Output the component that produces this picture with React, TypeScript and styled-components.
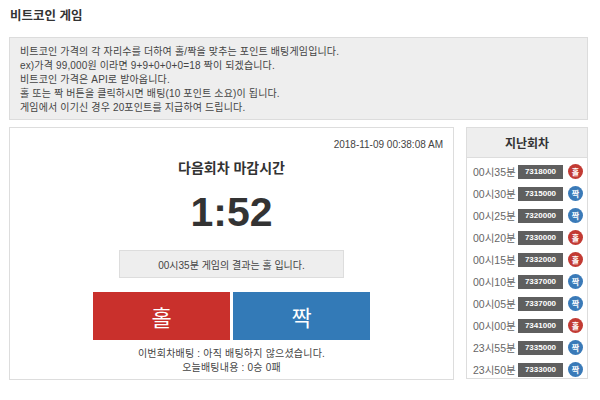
import React from "react";
import styled, { createGlobalStyle } from "styled-components";

const Global = createGlobalStyle`
  html, body { margin: 0; padding: 0; background: #fff; }
  body {
    font-family: "Liberation Sans", "Noto Sans CJK KR", Arial, sans-serif;
    color: #333;
  }
`;

const Page = styled.div`
  width: 579px;
  margin-left: 9px;
  display: flex;
  flex-direction: column;
`;

const Title = styled.h1`
  margin: 6px 0 11px 1px;
  font-size: 12.5px;
  line-height: 20px;
  font-weight: 700;
  color: #333;
`;

const InfoBox = styled.div`
  background: #eeeeee;
  border: 1px solid #dcdcdc;
  padding: 7px 10px 4px;
  font-size: 10px;
  line-height: 14px;
  color: #444;
  letter-spacing: 0.15px;
`;

const Columns = styled.div`
  display: flex;
  gap: 12px;
  margin-top: 7px;
  align-items: flex-start;
`;

const MainPanel = styled.div`
  width: 445px;
  box-sizing: border-box;
  border: 1px solid #dddddd;
  padding: 10px 10px 4px;
  display: flex;
  flex-direction: column;
  align-items: center;
`;

const DateLine = styled.div`
  align-self: flex-end;
  font-size: 10px;
  line-height: 14px;
  color: #444;
`;

const Heading = styled.div`
  margin-top: 6px;
  font-size: 14px;
  line-height: 20px;
  font-weight: 700;
  color: #333;
`;

const Timer = styled.div`
  margin-top: 12px;
  font-size: 41px;
  line-height: 44px;
  font-weight: 700;
  color: #333;
`;

const ResultBox = styled.div`
  margin-top: 16px;
  width: 225px;
  height: 28px;
  box-sizing: border-box;
  background: #eeeeee;
  border: 1px solid #dddddd;
  display: flex;
  align-items: center;
  justify-content: center;
  font-size: 10px;
  color: #444;
`;

const ButtonRow = styled.div`
  margin-top: 14px;
  display: flex;
  gap: 3px;
`;

const BetButton = styled.button<{ $tone: "odd" | "even" }>`
  width: 137px;
  height: 48px;
  border: none;
  padding: 0;
  background: ${(p) => (p.$tone === "odd" ? "#c9302c" : "#337ab7")};
  color: #fff;
  font-family: "Liberation Sans", "Noto Sans CJK KR", sans-serif;
  font-size: 22px;
  cursor: pointer;
`;

const Note = styled.div<{ $first?: boolean }>`
  margin-top: ${(p) => (p.$first ? "7px" : "0")};
  font-size: 10px;
  line-height: 14px;
  color: #444;
  letter-spacing: 0.2px;
`;

const Side = styled.div`
  width: 122px;
  box-sizing: border-box;
  border: 1px solid #dddddd;
`;

const SideHeader = styled.div`
  height: 29px;
  background: #eeeeee;
  border-bottom: 1px solid #dddddd;
  display: flex;
  align-items: center;
  justify-content: center;
  font-size: 12px;
  font-weight: 700;
  color: #333;
`;

const SideList = styled.div`
  padding: 5px 0 0 6px;
  display: flex;
  flex-direction: column;
  gap: 5px;
`;

const SideRow = styled.div`
  height: 17px;
  display: flex;
  align-items: center;
`;

const RoundTime = styled.span`
  width: 45px;
  font-size: 10.5px;
  color: #666;
`;

const Price = styled.span`
  width: 45px;
  height: 14px;
  background: #5f5f5f;
  color: #fff;
  font-size: 8px;
  font-weight: 700;
  display: flex;
  align-items: center;
  justify-content: center;
`;

const Dot = styled.span<{ $tone: "odd" | "even" }>`
  margin-left: 5px;
  width: 15px;
  height: 15px;
  border-radius: 50%;
  background: ${(p) => (p.$tone === "odd" ? "#c23a33" : "#3a7ab8")};
  color: #fff;
  font-size: 8px;
  font-weight: 700;
  display: flex;
  align-items: center;
  justify-content: center;
`;

const rounds: { t: string; p: string; r: "odd" | "even" }[] = [
  { t: "00시35분", p: "7318000", r: "odd" },
  { t: "00시30분", p: "7315000", r: "even" },
  { t: "00시25분", p: "7320000", r: "even" },
  { t: "00시20분", p: "7330000", r: "odd" },
  { t: "00시15분", p: "7332000", r: "odd" },
  { t: "00시10분", p: "7337000", r: "even" },
  { t: "00시05분", p: "7337000", r: "even" },
  { t: "00시00분", p: "7341000", r: "odd" },
  { t: "23시55분", p: "7335000", r: "even" },
  { t: "23시50분", p: "7333000", r: "even" },
];

export default function App() {
  return (
    <>
      <Global />
      <Page>
        <Title>비트코인 게임</Title>
        <InfoBox>
          비트코인 가격의 각 자리수를 더하여 홀/짝을 맞추는 포인트 배팅게임입니다.
          <br />
          ex)가격 99,000원 이라면 9+9+0+0+0=18 짝이 되겠습니다.
          <br />
          비트코인 가격은 API로 받아옵니다.
          <br />
          홀 또는 짝 버튼을 클릭하시면 배팅(10 포인트 소요)이 됩니다.
          <br />
          게임에서 이기신 경우 20포인트를 지급하여 드립니다.
        </InfoBox>
        <Columns>
          <MainPanel>
            <DateLine>2018-11-09 00:38:08 AM</DateLine>
            <Heading>다음회차 마감시간</Heading>
            <Timer>1:52</Timer>
            <ResultBox>00시35분 게임의 결과는 홀 입니다.</ResultBox>
            <ButtonRow>
              <BetButton $tone="odd">홀</BetButton>
              <BetButton $tone="even">짝</BetButton>
            </ButtonRow>
            <Note $first>이번회차배팅 : 아직 배팅하지 않으셨습니다.</Note>
            <Note>오늘배팅내용 : 0승 0패</Note>
          </MainPanel>
          <Side>
            <SideHeader>지난회차</SideHeader>
            <SideList>
              {rounds.map((r, i) => (
                <SideRow key={i}>
                  <RoundTime>{r.t}</RoundTime>
                  <Price>{r.p}</Price>
                  <Dot $tone={r.r}>{r.r === "odd" ? "홀" : "짝"}</Dot>
                </SideRow>
              ))}
            </SideList>
          </Side>
        </Columns>
      </Page>
    </>
  );
}
